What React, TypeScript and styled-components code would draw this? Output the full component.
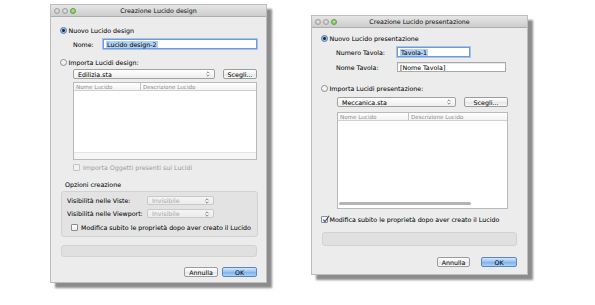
import React from "react";
import styled, { createGlobalStyle, css } from "styled-components";

const Global = createGlobalStyle`
  html, body { margin: 0; padding: 0; background: #ffffff; }
  body { font-family: "DejaVu Sans", "Liberation Sans", sans-serif; font-size: 6.3px; color: #161616; text-shadow: 0 0 0.3px rgba(0, 0, 0, 0.3); }
  *, *::before, *::after { box-sizing: border-box; }
`;

const Stage = styled.div`
  display: flex;
  align-items: flex-start;
  gap: 44px;
  padding-left: 50px;
  width: 595px;
  height: 305px;
`;

const Window = styled.div<{ $top: number; $h: number }>`
  margin-top: ${(p) => p.$top}px;
  width: 217px;
  height: ${(p) => p.$h}px;
  background: #ececec;
  border: 1px solid #bdbdbd;
  box-shadow: 5px 5px 2px rgba(0, 0, 0, 0.45);
  display: flex;
  flex-direction: column;
`;

const TitleBar = styled.div`
  position: relative;
  height: 12px;
  flex: none;
  background: linear-gradient(#e6e6e6, #cdcdcd);
  border-bottom: 1px solid #adadad;
  display: flex;
  align-items: center;
  justify-content: center;
  color: #2e2e2e;
`;

const Lights = styled.div`
  position: absolute;
  left: 3px;
  top: 3px;
  display: flex;
  gap: 2px;
`;

const Light = styled.span<{ $green?: boolean }>`
  width: 6px;
  height: 6px;
  border-radius: 50%;
  background: ${(p) => (p.$green ? "radial-gradient(circle at 50% 40%, #b7e59b, #6fbf4c)" : "radial-gradient(circle at 50% 40%, #e6e6e6, #bdbdbd)")};
  border: 0.5px solid ${(p) => (p.$green ? "#5e9a44" : "#9f9f9f")};
`;

const Body = styled.div<{ $pl: number; $pr: number }>`
  display: flex;
  flex-direction: column;
  padding: 0 ${(p) => p.$pr}px 0 ${(p) => p.$pl}px;
`;

const Row = styled.div<{ $mt: number; $h: number; $indent?: number; $gap?: number }>`
  display: flex;
  align-items: center;
  margin-top: ${(p) => p.$mt}px;
  height: ${(p) => p.$h}px;
  margin-left: ${(p) => p.$indent ?? 0}px;
  gap: ${(p) => p.$gap ?? 0}px;
  white-space: nowrap;
`;

const Radio = styled.span<{ $on?: boolean }>`
  width: 7px;
  height: 7px;
  border-radius: 50%;
  margin-right: 1.5px;
  flex: none;
  border: 0.6px solid ${(p) => (p.$on ? "#4e77a8" : "#8e8e8e")};
  background: ${(p) => (p.$on ? "radial-gradient(circle, #1d2a3a 0 1.2px, #8fb8e8 1.6px, #c9def6 100%)" : "linear-gradient(#ffffff, #ececec)")};
`;

const Check = styled.span<{ $on?: boolean; $disabled?: boolean }>`
  width: 7px;
  height: 7px;
  flex: none;
  position: relative;
  margin-right: 3px;
  border-radius: 1px;
  border: 0.6px solid ${(p) => (p.$disabled ? "#c4c4c4" : "#8c8c8c")};
  background: ${(p) => (p.$disabled ? "#f1f1f1" : "linear-gradient(#ffffff, #ededed)")};
  ${(p) => p.$on && css`margin-right: 1.5px;`}
`;

const CheckMark = styled.svg`
  position: absolute;
  left: 0px;
  top: -2px;
  width: 8px;
  height: 8px;
`;

const Text = styled.span<{ $muted?: boolean; $w?: number }>`
  color: ${(p) => (p.$muted ? "#9b9b9b" : "#161616")};
  ${(p) => p.$muted && css`text-shadow: none;`}
  ${(p) => p.$w !== undefined && css`width: ${p.$w}px; flex: none;`}
`;

const Field = styled.div<{ $w?: number; $focus?: boolean }>`
  height: 100%;
  ${(p) => (p.$w ? css`width: ${p.$w}px; flex: none;` : css`flex: 1;`)}
  background: #ffffff;
  border: 0.6px solid ${(p) => (p.$focus ? "#6c9bd8" : "#a9a9a9")};
  box-shadow: ${(p) => (p.$focus ? "0 0 0 1px #a5c4ec" : "inset 0 0.5px 0 #d0d0d0")};
  display: flex;
  align-items: center;
  padding-left: 2px;
`;

const Selected = styled.span`
  background: #b3d1f6;
  padding: 0 1px;
  line-height: 7px;
`;

const PopUp = styled.div<{ $w: number; $disabled?: boolean }>`
  position: relative;
  width: ${(p) => p.$w}px;
  height: 100%;
  flex: none;
  border-radius: 2px;
  border: 0.6px solid ${(p) => (p.$disabled ? "#c9c9c9" : "#a2a2a2")};
  background: ${(p) => (p.$disabled ? "linear-gradient(#f4f4f4, #ececec)" : "linear-gradient(#ffffff, #eeeeee)")};
  color: ${(p) => (p.$disabled ? "#a6a6a6" : "#161616")};
  ${(p) => p.$disabled && css`text-shadow: none;`}
  display: flex;
  align-items: center;
  padding-left: 4px;
`;

const Arrows = styled.svg`
  position: absolute;
  right: 4px;
  top: 50%;
  width: 4px;
  height: 6px;
  margin-top: -3px;
`;

const PushButton = styled.div<{ $w: number; $default?: boolean }>`
  width: ${(p) => p.$w}px;
  height: 100%;
  flex: none;
  border-radius: 2px;
  display: flex;
  align-items: center;
  justify-content: center;
  border: 0.6px solid ${(p) => (p.$default ? "#5b87c0" : "#9c9c9c")};
  background: ${(p) => (p.$default ? "linear-gradient(#d3e6fb, #93c0f0 50%, #7db2ec 51%, #a9d0f7)" : "linear-gradient(#ffffff, #f0f0f0 50%, #e6e6e6 51%, #f6f6f6)")};
  color: #161616;
`;

const ListBox = styled.div<{ $w: number; $h: number }>`
  width: ${(p) => p.$w}px;
  height: ${(p) => p.$h}px;
  background: #ffffff;
  border: 0.6px solid #b9b9b9;
  display: flex;
  flex-direction: column;
`;

const ListWrap = styled.div<{ $mt: number; $indent: number }>`
  margin-top: ${(p) => p.$mt}px;
  margin-left: ${(p) => p.$indent}px;
`;

const ListHeader = styled.div`
  height: 8px;
  flex: none;
  display: flex;
  align-items: center;
  border-bottom: 0.6px solid #cfcfcf;
  background: linear-gradient(#ffffff, #f3f3f3);
  color: #8a8a8a;
  font-size: 5.6px;
  text-shadow: none;
`;

const HeaderCell = styled.div<{ $w?: number; $sep?: boolean }>`
  ${(p) => (p.$w ? css`width: ${p.$w}px;` : css`flex: 1;`)}
  padding-left: 2px;
  height: 100%;
  display: flex;
  align-items: center;
  border-left: ${(p) => (p.$sep ? "0.6px solid #c4c4c4" : "none")};
  white-space: nowrap;
`;

const ListFill = styled.div`
  flex: 1;
`;

const ScrollTrack = styled.div`
  height: 7px;
  flex: none;
  background: #f6f6f6;
  border-top: 0.6px solid #e4e4e4;
`;

const ScrollArea = styled.div`
  height: 7px;
  flex: none;
  padding: 1px 36px 2px 1px;
`;

const Thumb = styled.div`
  height: 3px;
  border-radius: 2px;
  background: #b4b4b4;
`;

const GroupLabel = styled.div<{ $mt: number }>`
  margin-top: ${(p) => p.$mt}px;
  margin-left: 5px;
  height: 8px;
  line-height: 8px;
  white-space: nowrap;
`;

const GroupBox = styled.div`
  margin: 2px -1px 0 1px;
  height: 46px;
  border-radius: 3px;
  border: 0.6px solid #d2d2d2;
  background: #e3e3e3;
  padding: 0 0 0 5px;
  display: flex;
  flex-direction: column;
`;

const StatusBar = styled.div<{ $mt: number; $h: number; $ml: number }>`
  margin-top: ${(p) => p.$mt}px;
  margin-left: ${(p) => p.$ml}px;
  height: ${(p) => p.$h}px;
  border-radius: 3px;
  border: 0.6px solid #d3d3d3;
  background: #e0e0e0;
`;

const ButtonRow = styled.div<{ $mt: number; $gap: number }>`
  margin-top: ${(p) => p.$mt}px;
  height: 10px;
  display: flex;
  justify-content: flex-end;
  gap: ${(p) => p.$gap}px;
`;

const PopArrows = () => (
  <Arrows viewBox="0 0 4 6">
    <path d="M0.6 2.2 L2 0.8 L3.4 2.2 M0.6 3.8 L2 5.2 L3.4 3.8" fill="none" stroke="#555" strokeWidth="0.7" />
  </Arrows>
);

const LeftDialog = () => (
  <Window $top={4} $h={279}>
    <TitleBar>
      <Lights>
        <Light />
        <Light />
        <Light $green />
      </Lights>
      Creazione Lucido design
    </TitleBar>
    <Body $pl={9} $pr={9}>
      <Row $mt={9} $h={8}>
        <Radio $on />
        <Text>Nuovo Lucido design</Text>
      </Row>
      <Row $mt={5} $h={10} $indent={13}>
        <Text $w={30}>Nome:</Text>
        <Field $focus>
          <Selected>Lucido design-2</Selected>
        </Field>
      </Row>
      <Row $mt={9} $h={8}>
        <Radio />
        <Text>Importa Lucidi design:</Text>
      </Row>
      <Row $mt={3} $h={10} $indent={13} $gap={8}>
        <PopUp $w={142}>
          Edilizia.sta
          <PopArrows />
        </PopUp>
        <PushButton $w={34}>Scegli...</PushButton>
      </Row>
      <ListWrap $mt={3} $indent={13}>
        <ListBox $w={184} $h={78}>
          <ListHeader>
            <HeaderCell $w={66}>Nome Lucido</HeaderCell>
            <HeaderCell $sep>Descrizione Lucido</HeaderCell>
          </ListHeader>
          <ListFill />
          <ScrollTrack />
        </ListBox>
      </ListWrap>
      <Row $mt={4} $h={7} $indent={13}>
        <Check $disabled />
        <Text $muted>Importa Oggetti presenti sui Lucidi</Text>
      </Row>
      <GroupLabel $mt={10}>Opzioni creazione</GroupLabel>
      <GroupBox>
        <Row $mt={4} $h={9}>
          <Text $w={80}>Visibilità nelle Viste:</Text>
          <PopUp $w={67} $disabled>
            Invisibile
            <PopArrows />
          </PopUp>
        </Row>
        <Row $mt={4} $h={9}>
          <Text $w={80}>Visibilità nelle Viewport:</Text>
          <PopUp $w={67} $disabled>
            Invisibile
            <PopArrows />
          </PopUp>
        </Row>
        <Row $mt={6} $h={7} $indent={4}>
          <Check />
          <Text>Modifica subito le proprietà dopo aver creato il Lucido</Text>
        </Row>
      </GroupBox>
      <StatusBar $mt={8} $h={12} $ml={1} />
      <ButtonRow $mt={10} $gap={4}>
        <PushButton $w={34}>Annulla</PushButton>
        <PushButton $w={35} $default>
          OK
        </PushButton>
      </ButtonRow>
    </Body>
  </Window>
);

const RightDialog = () => (
  <Window $top={15} $h={260}>
    <TitleBar>
      <Lights>
        <Light />
        <Light />
        <Light $green />
      </Lights>
      Creazione Lucido presentazione
    </TitleBar>
    <Body $pl={9} $pr={10}>
      <Row $mt={6} $h={8}>
        <Radio $on />
        <Text>Nuovo Lucido presentazione</Text>
      </Row>
      <Row $mt={5} $h={10} $indent={15}>
        <Text $w={61}>Numero Tavola:</Text>
        <Field $w={73} $focus>
          <Selected>Tavola-1</Selected>
        </Field>
      </Row>
      <Row $mt={5} $h={10} $indent={15}>
        <Text $w={61}>Nome Tavola:</Text>
        <Field $w={109}>[Nome Tavola]</Field>
      </Row>
      <Row $mt={12} $h={8}>
        <Radio />
        <Text>Importa Lucidi presentazione:</Text>
      </Row>
      <Row $mt={5} $h={10} $indent={16} $gap={8}>
        <PopUp $w={119}>
          Meccanica.sta
          <PopArrows />
        </PopUp>
        <PushButton $w={44}>Scegli...</PushButton>
      </Row>
      <ListWrap $mt={5} $indent={16}>
        <ListBox $w={171} $h={97}>
          <ListHeader>
            <HeaderCell $w={70}>Nome Lucido</HeaderCell>
            <HeaderCell $sep>Descrizione Lucido</HeaderCell>
          </ListHeader>
          <ListFill />
          <ScrollArea>
            <Thumb />
          </ScrollArea>
        </ListBox>
      </ListWrap>
      <Row $mt={7} $h={7}>
        <Check $on>
          <CheckMark viewBox="0 0 8 8">
            <path d="M1.3 4.6 L3 6.6 L7.2 0.8" fill="none" stroke="#2a4f86" strokeWidth="1.1" />
          </CheckMark>
        </Check>
        <Text>Modifica subito le proprietà dopo aver creato il Lucido</Text>
      </Row>
      <StatusBar $mt={9} $h={14} $ml={1} />
      <ButtonRow $mt={11} $gap={11}>
        <PushButton $w={33}>Annulla</PushButton>
        <PushButton $w={36} $default>
          OK
        </PushButton>
      </ButtonRow>
    </Body>
  </Window>
);

export default function App() {
  return (
    <>
      <Global />
      <Stage>
        <LeftDialog />
        <RightDialog />
      </Stage>
    </>
  );
}
